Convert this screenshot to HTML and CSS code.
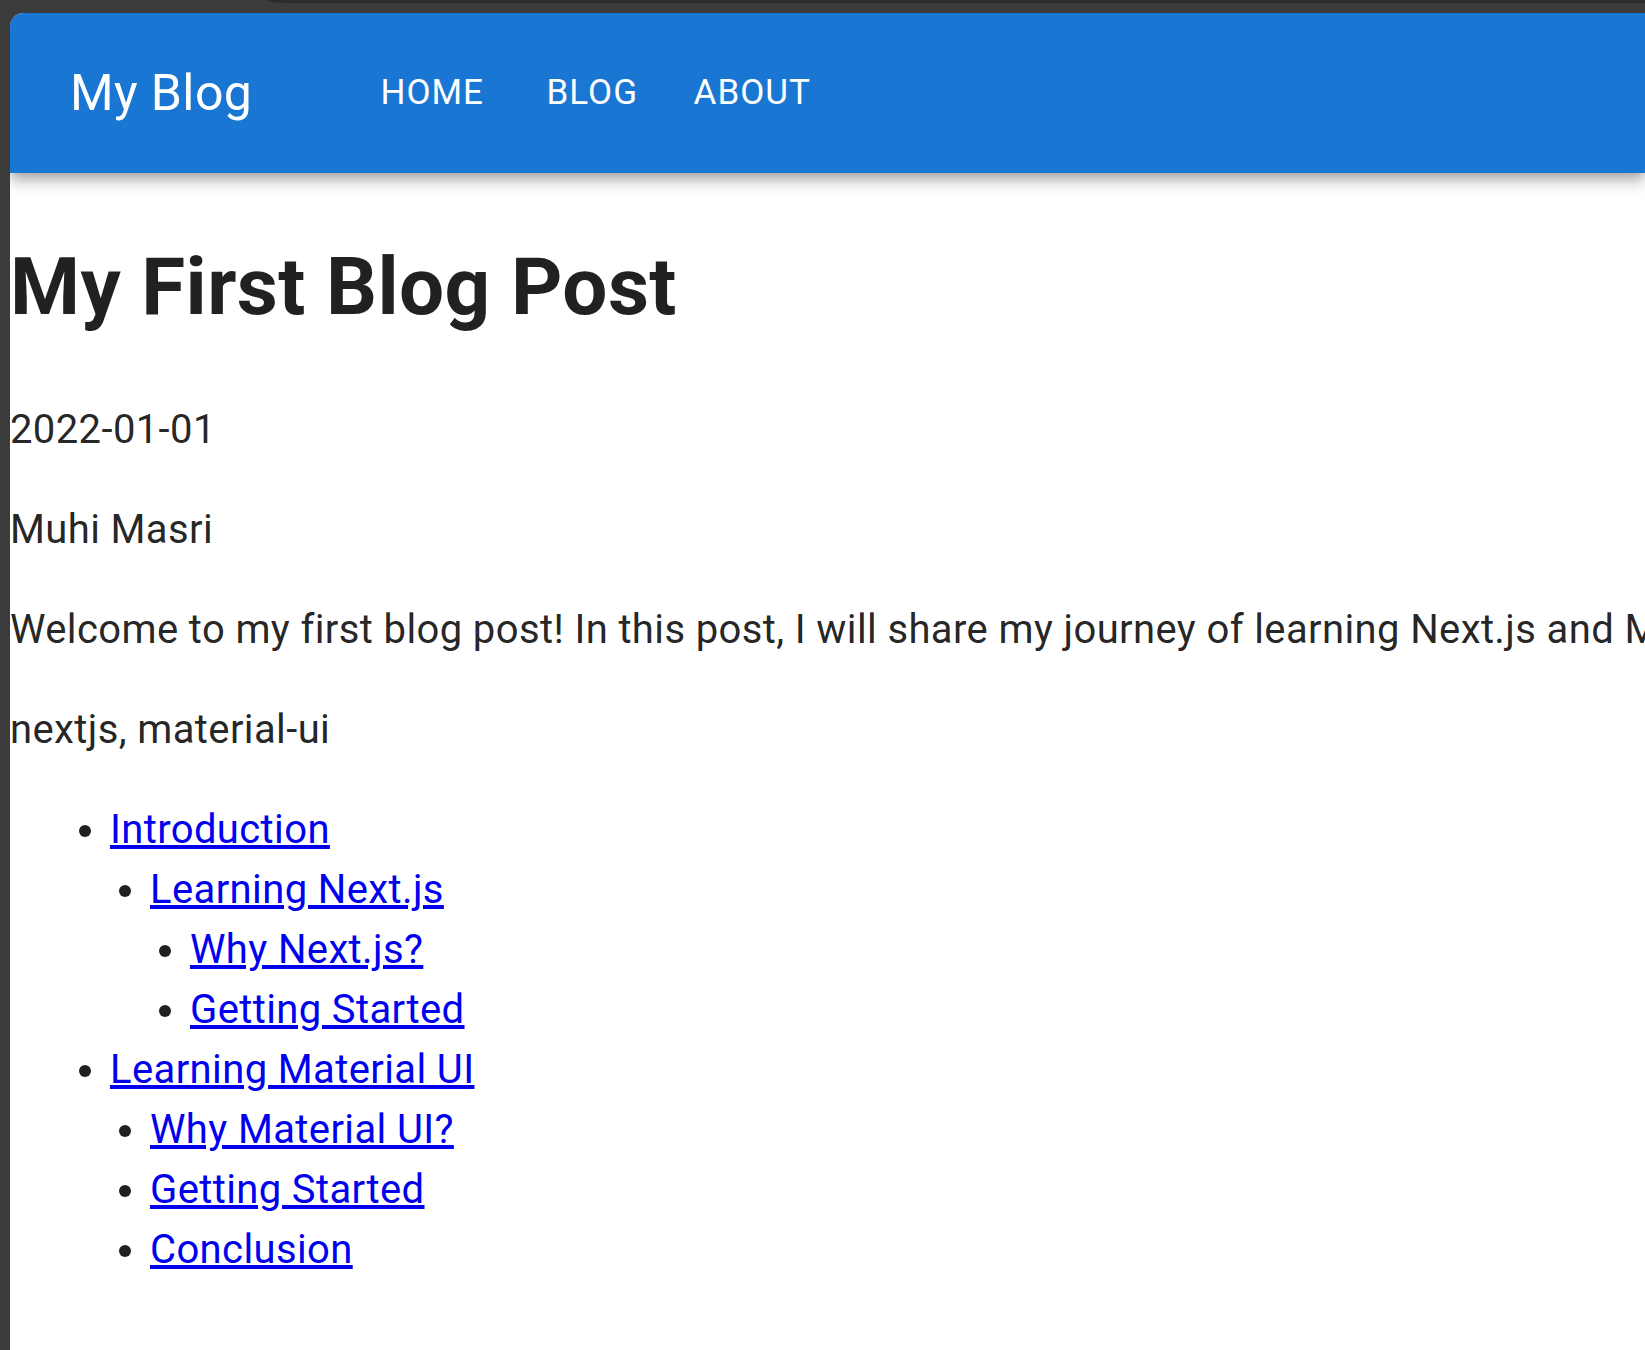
FILE: index.html
```html
<!DOCTYPE html>
<html lang="en">
<head>
<meta charset="utf-8">
<title>My Blog</title>
<link rel="stylesheet" href="styles.css">
</head>
<body>
<div class="chrome-top"><div class="chrome-tab"></div></div>
<div class="window">
  <header class="appbar">
    <div class="toolbar">
      <div class="brand">My Blog</div>
      <nav class="nav">
        <a class="nav-btn" href="#">Home</a>
        <a class="nav-btn" href="#">Blog</a>
        <a class="nav-btn" href="#">About</a>
      </nav>
    </div>
  </header>
  <main class="post">
    <h1>My First Blog Post</h1>
    <p>2022-01-01</p>
    <p>Muhi Masri</p>
    <p>Welcome to my first blog post! In this post, I will share my journey of learning Next.js and Material UI.</p>
    <p>nextjs, material-ui</p>
    <ul class="toc">
      <li><a href="#introduction">Introduction</a>
        <ul>
          <li><a href="#learning-nextjs">Learning Next.js</a>
            <ul>
              <li><a href="#why-nextjs">Why Next.js?</a></li>
              <li><a href="#getting-started">Getting Started</a></li>
            </ul>
          </li>
        </ul>
      </li>
      <li><a href="#learning-material-ui">Learning Material UI</a>
        <ul>
          <li><a href="#why-material-ui">Why Material UI?</a></li>
          <li><a href="#getting-started-1">Getting Started</a></li>
          <li><a href="#conclusion">Conclusion</a></li>
        </ul>
      </li>
    </ul>
  </main>
</div>
</body>
</html>
```
FILE: styles.css
```css
html, body {
  margin: 0;
  height: 100%;
  overflow: hidden;
}

body {
  background: #3b3b3b;
  font-family: Roboto, "Noto Sans", "Liberation Sans", sans-serif;
  display: flex;
  flex-direction: column;
}

.chrome-top {
  flex: none;
  height: 13px;
  display: flex;
}

.chrome-tab {
  flex: 1;
  margin-left: 268px;
  height: 3px;
  background: #2b2b2b;
  border-bottom-left-radius: 18px 3px;
}

.window {
  flex: 1;
  margin-left: 10px;
  background: #ffffff;
  border-top-left-radius: 14px;
  overflow: hidden;
}

.appbar {
  position: relative;
  z-index: 1;
  background: #1976d2;
  color: #ffffff;
  box-shadow: 0 5px 10px -2.5px rgba(0, 0, 0, 0.2),
              0 10px 12.5px 0 rgba(0, 0, 0, 0.14),
              0 2.5px 25px 0 rgba(0, 0, 0, 0.12);
}

.toolbar {
  display: flex;
  align-items: center;
  min-height: 160px;
  padding: 0 60px;
}

.brand {
  font-size: 50px;
  font-weight: 400;
  line-height: 1.6;
  letter-spacing: 0.0075em;
  margin-right: 100px;
}

.nav {
  display: flex;
}

.nav-btn {
  min-width: 160px;
  box-sizing: border-box;
  text-align: center;
  font-size: 35px;
  font-weight: 400;
  line-height: 1.75;
  letter-spacing: 0.02857em;
  text-transform: uppercase;
  padding: 15px 20px;
  color: #ffffff;
  text-decoration: none;
}

.post {
  color: rgba(0, 0, 0, 0.87);
  font-size: 40px;
  line-height: 1.5;
  letter-spacing: 0.0095em;
  white-space: nowrap;
}

.post h1 {
  font-size: 80px;
  font-weight: 700;
  margin: 53.6px 0;
}

.post p {
  margin: 40px 0;
}

.toc,
.toc ul {
  list-style: disc;
}

.toc {
  margin: 40px 0;
  padding-left: 100px;
}

.toc ul {
  margin: 0;
  padding-left: 40px;
}

.toc a {
  color: #0000ee;
}
```
